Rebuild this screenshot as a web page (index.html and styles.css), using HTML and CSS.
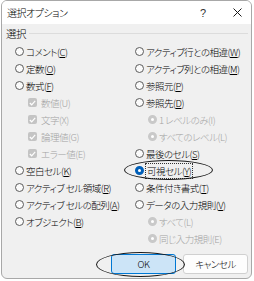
FILE: index.html
```html
<!DOCTYPE html>
<html lang="ja">
  <head>
    <meta charset="UTF-8" />
    <title>選択オプション</title>
    <link rel="stylesheet" href="styles.css">
  </head>
  <body>
    <div class="dialog">
      <div class="titlebar">
        <span class="title">選択オプション</span>
        <span class="help">?</span>
        <span class="close">
          <svg width="9" height="9" viewBox="0 0 9 9"><path d="M0.5 0.5 L8.5 8.5 M8.5 0.5 L0.5 8.5" stroke="#1a1a1a" stroke-width="1"/></svg>
        </span>
      </div>
      <div class="content">
        <div class="groupHead">
          <span>選択</span>
          <span class="rule"></span>
        </div>
        <div class="columns">
          <div class="col">
            <div class="row"><span class="radio"></span><span class="label">コメント(<u>C</u>)</span></div>
            <div class="row"><span class="radio"></span><span class="label">定数(<u>O</u>)</span></div>
            <div class="row"><span class="radio"></span><span class="label">数式(<u>F</u>)</span></div>
            <div class="row sub disabled"><span class="check"><svg width="7" height="6" viewBox="0 0 7 6"><path d="M0.8 3 L2.7 4.8 L6.2 0.9" fill="none" stroke="#fff" stroke-width="1.2"/></svg></span><span class="label">数値(U)</span></div>
            <div class="row sub disabled"><span class="check"><svg width="7" height="6" viewBox="0 0 7 6"><path d="M0.8 3 L2.7 4.8 L6.2 0.9" fill="none" stroke="#fff" stroke-width="1.2"/></svg></span><span class="label">文字(X)</span></div>
            <div class="row sub disabled"><span class="check"><svg width="7" height="6" viewBox="0 0 7 6"><path d="M0.8 3 L2.7 4.8 L6.2 0.9" fill="none" stroke="#fff" stroke-width="1.2"/></svg></span><span class="label">論理値(G)</span></div>
            <div class="row sub disabled"><span class="check"><svg width="7" height="6" viewBox="0 0 7 6"><path d="M0.8 3 L2.7 4.8 L6.2 0.9" fill="none" stroke="#fff" stroke-width="1.2"/></svg></span><span class="label">エラー値(E)</span></div>
            <div class="row"><span class="radio"></span><span class="label">空白セル(<u>K</u>)</span></div>
            <div class="row"><span class="radio"></span><span class="label">アクティブ セル領域(<u>R</u>)</span></div>
            <div class="row"><span class="radio"></span><span class="label">アクティブ セルの配列(<u>A</u>)</span></div>
            <div class="row"><span class="radio"></span><span class="label">オブジェクト(<u>B</u>)</span></div>
          </div>
          <div class="col">
            <div class="row"><span class="radio"></span><span class="label">アクティブ行との相違(<u>W</u>)</span></div>
            <div class="row"><span class="radio"></span><span class="label">アクティブ列との相違(<u>M</u>)</span></div>
            <div class="row"><span class="radio"></span><span class="label">参照元(<u>P</u>)</span></div>
            <div class="row"><span class="radio"></span><span class="label">参照先(<u>D</u>)</span></div>
            <div class="row sub disabled"><span class="radio"></span><span class="label">1 レベルのみ(I)</span></div>
            <div class="row sub disabled"><span class="radio"></span><span class="label">すべてのレベル(L)</span></div>
            <div class="row"><span class="radio"></span><span class="label">最後のセル(<u>S</u>)</span></div>
            <div class="row marked"><span class="radio selected"></span><span class="label focus">可視セル(<u>Y</u>)</span><span class="ellipse"></span></div>
            <div class="row"><span class="radio"></span><span class="label">条件付き書式(<u>T</u>)</span></div>
            <div class="row"><span class="radio"></span><span class="label">データの入力規則(<u>V</u>)</span></div>
            <div class="row sub disabled"><span class="radio"></span><span class="label">すべて(L)</span></div>
            <div class="row sub disabled"><span class="radio"></span><span class="label">同じ入力規則(E)</span></div>
          </div>
        </div>
        <div class="buttons">
          <div class="buttonWrap">
            <button class="btn primary">OK</button>
            <span class="ellipse okEllipse"></span>
          </div>
          <button class="btn">キャンセル</button>
        </div>
      </div>
    </div>
  </body>
</html>
```

FILE: styles.css
```css
body {
  margin: 0;
  background-color: #ffffff;
  font-family: "Noto Sans CJK JP", "Noto Sans", sans-serif;
  font-size: 9.5px;
  font-weight: 300;
  letter-spacing: -0.5px;
  font-feature-settings: "palt";
  color: #000000;
}

.dialog {
  margin-left: 1px;
  width: 251px;
  height: 279px;
  box-sizing: border-box;
  border: 1px solid #a8a8a8;
  border-radius: 6px;
  background-color: #f0f0f0;
  overflow: hidden;
}

.titlebar {
  height: 23px;
  background-color: #ffffff;
  display: flex;
  align-items: center;
  padding-left: 5px;
  font-size: 10px;
}

.title {
  flex: 1;
}

.help {
  width: 20px;
  margin-right: 13px;
  color: #333;
  font-family: "Liberation Sans", sans-serif;
  font-size: 11px;
}

.close {
  width: 18px;
  display: flex;
  align-items: center;
}

.content {
  padding: 2px 3px 0 4px;
}

.groupHead {
  height: 14px;
  display: flex;
  align-items: center;
  gap: 3px;
  font-size: 10.5px;
}

.rule {
  flex: 1;
  height: 1px;
  background-color: #dcdcdc;
}

.columns {
  margin-top: 3px;
  padding-left: 9px;
  display: grid;
  grid-template-columns: 120px 1fr;
}

.row {
  height: 17px;
  display: flex;
  align-items: center;
  gap: 2px;
  white-space: nowrap;
}

.row.sub {
  padding-left: 13px;
}

.disabled {
  color: #a3a3a3;
}

.radio {
  width: 9px;
  height: 9px;
  box-sizing: border-box;
  border: 1px solid #5c5c5c;
  border-radius: 50%;
  background-color: #fbfbfb;
  flex: none;
}

.radio.selected {
  border: 3px solid #005fb8;
  background-color: #ffffff;
}

.disabled .radio {
  border: 3px solid #c9c9c9;
  background-color: #ffffff;
}

.check {
  width: 9px;
  height: 9px;
  border-radius: 2px;
  background-color: #c4c4c4;
  display: flex;
  align-items: center;
  justify-content: center;
  margin-right: 2px;
  flex: none;
}

.label u {
  text-underline-offset: 1px;
}

.focus {
  outline: 1px dotted #333;
  padding: 0 1px;
}

.marked,
.buttonWrap {
  position: relative;
}

.ellipse {
  position: absolute;
  border: 1px solid #1a1a1a;
  border-radius: 50%;
  pointer-events: none;
}

.marked .ellipse {
  left: -11px;
  top: -2px;
  width: 87px;
  height: 18px;
}

.buttons {
  margin-top: 7px;
  display: flex;
  justify-content: flex-end;
  gap: 7px;
}

.btn {
  width: 65px;
  height: 20px;
  font-family: inherit;
  font-size: 9.5px;
  font-weight: 300;
  letter-spacing: inherit;
  font-feature-settings: "palt";
  color: #000000;
  border: 1px solid #d0d0d0;
  border-radius: 3px;
  background-color: #fdfdfd;
  padding: 0;
}

.btn.primary {
  background-color: #cce4f7;
  border-color: #0078d4;
}

.okEllipse {
  left: -15px;
  top: -2px;
  width: 87px;
  height: 23px;
  z-index: 1;
}
```
